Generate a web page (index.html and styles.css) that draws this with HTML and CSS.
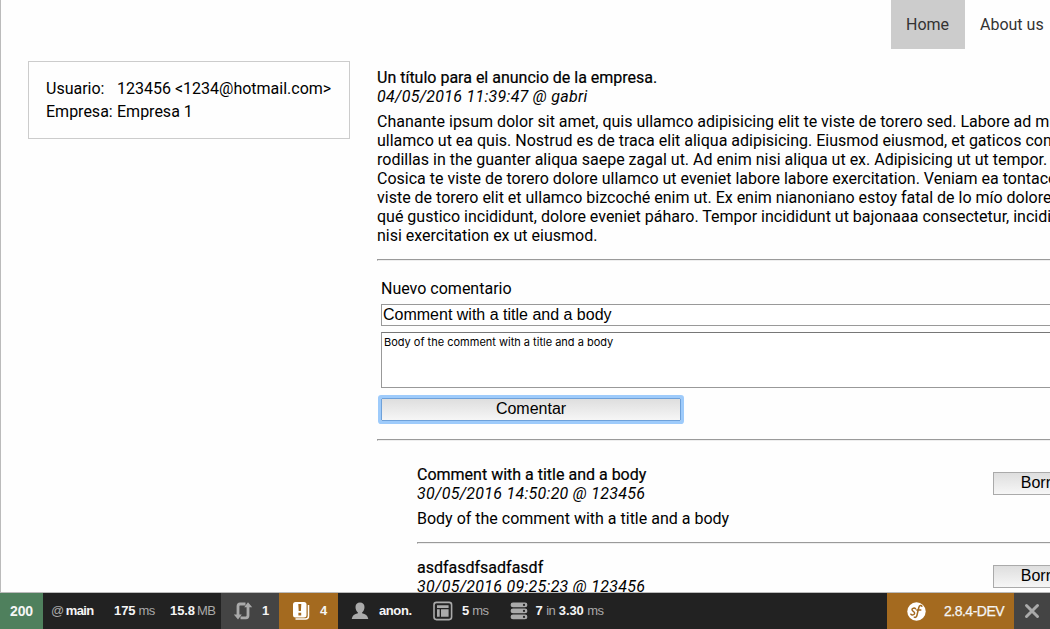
FILE: index.html
```html
<!DOCTYPE html>
<html lang="es">
<head>
<meta charset="utf-8">
<title>Anuncio</title>
<link rel="stylesheet" href="styles.css">
</head>
<body>
<div class="page">
  <nav class="nav"><a class="nav-item current">Home</a><a class="nav-item">About us</a></nav>
  <div class="columns">
    <aside class="user-card">
      <span>Usuario:</span><span>123456 &lt;1234@hotmail.com&gt;</span>
      <span>Empresa:</span><span>Empresa 1</span>
    </aside>
    <main class="content">
      <article class="post">
        <h1 class="title">Un título para el anuncio de la empresa.</h1>
        <p class="meta">04/05/2016 11:39:47 @ gabri</p>
        <p class="text">Chanante ipsum dolor sit amet, quis ullamco adipisicing elit te viste de torero sed. Labore ad minim<br>ullamco ut ea quis. Nostrud es de traca elit aliqua adipisicing. Eiusmod eiusmod, et gaticos consectetur<br>rodillas in the guanter aliqua saepe zagal ut. Ad enim nisi aliqua ut ex. Adipisicing ut ut tempor.<br>Cosica te viste de torero dolore ullamco ut eveniet labore labore exercitation. Veniam ea tontaco<br>viste de torero elit et ullamco bizcoché enim ut. Ex enim nianoniano estoy fatal de lo mío dolore<br>qué gustico incididunt, dolore eveniet páharo. Tempor incididunt ut bajonaaa consectetur, incididunt<br>nisi exercitation ex ut eiusmod.</p>
      </article>
      <div class="rule"></div>
      <form class="comment-form">
        <label class="form-label">Nuevo comentario</label>
        <input class="field" type="text" value="Comment with a title and a body">
        <textarea class="area">Body of the comment with a title and a body</textarea>
        <button class="button submit" type="button">Comentar</button>
      </form>
      <div class="rule"></div>
      <section class="comments">
        <article class="comment">
          <div>
            <h2 class="title">Comment with a title and a body</h2>
            <p class="meta">30/05/2016 14:50:20 @ 123456</p>
            <p class="text">Body of the comment with a title and a body</p>
          </div>
          <button class="button delete" type="button">Borrar</button>
        </article>
        <div class="rule"></div>
        <article class="comment second">
          <div>
            <h2 class="title">asdfasdfsadfasdf</h2>
            <p class="meta">30/05/2016 09:25:23 @ 123456</p>
          </div>
          <button class="button delete" type="button">Borrar</button>
        </article>
      </section>
    </main>
  </div>
</div>
<footer class="toolbar">
  <div class="cell status"><b>200</b></div>
  <div class="cell route"><i>@</i> <b>main</b></div>
  <div class="cell time"><b>175</b> <i>ms</i></div>
  <div class="cell memory"><b>15.8</b> <i>MB</i></div>
  <div class="cell ajax">
    <svg width="20" height="20" viewBox="0 0 20 20"><path fill="none" stroke="#aaa" stroke-width="2.800" d="M12.500 3H7Q5 3 5 5.200V15M7.500 16.800H13q2 0 2-2.200V5"/><path fill="#aaa" d="M.8 13.500h8L5 18.500zM11.200 6.300h8L15 1.200z"/></svg>
    <b>1</b>
  </div>
  <div class="cell logs">
    <svg width="18" height="20" viewBox="0 0 18 20"><path fill="none" stroke="#fff" stroke-width="1.500" d="M3.500 18h10q3 0 3-3V4"/><rect x="1" y="1" width="13.500" height="15.500" rx="2.500" fill="#fff"/><path fill="#a46a1f" d="M6.300 3h3l-.4 7H6.700zM6.400 11.800h2.800v2.700H6.400z"/></svg>
    <b>4</b>
  </div>
  <div class="cell user">
    <svg width="18" height="18" viewBox="0 0 18 18"><path fill="#aaa" d="M4.500 5C4.500 2 6.300.4 9 .4S13.500 2 13.500 5c0 2.500-1 4.500-2.400 5.500v.8c3.300.7 5.700 2.300 6.200 5.600H.7c.5-3.300 2.900-4.900 6.200-5.600v-.8C5.500 9.500 4.500 7.500 4.500 5z"/></svg>
    <b>anon.</b>
  </div>
  <div class="cell twig">
    <svg width="20" height="20" viewBox="0 0 20 20"><rect x="1" y="1.400" width="17.600" height="17.200" rx="2.500" fill="none" stroke="#aaa" stroke-width="1.600"/><path fill="#aaa" d="M4 4.300h11.600v2.800H4zM4 8.200h2.700v7.500H4zM8 8.200h7.600v7.500H8z"/></svg>
    <b>5</b> <i>ms</i>
  </div>
  <div class="cell database">
    <svg width="18" height="18" viewBox="0 0 18 18"><path fill="#aaa" d="M3 .5h12a2.400 2.400 0 0 1 0 4.800H3A2.400 2.400 0 0 1 3 .5zM3 6.500h12a2.400 2.400 0 0 1 0 4.800H3a2.400 2.400 0 0 1 0-4.800zM3 12.500h12a2.400 2.400 0 0 1 0 4.800H3a2.400 2.400 0 0 1 0-4.800z"/><g fill="#222"><circle cx="14" cy="2.900" r="1.100"/><circle cx="14" cy="8.900" r="1.100"/><circle cx="14" cy="14.900" r="1.100"/></g></svg>
    <b>7</b> <i>in</i> <b>3.30</b> <i>ms</i>
  </div>
  <div class="cell version">
    <svg width="19" height="19" viewBox="0 0 19 19"><circle cx="9.500" cy="9.500" r="9.200" fill="#fff"/><path fill="none" stroke="#a46a1f" stroke-width="1.500" stroke-linecap="round" d="M8.500 6.700C7.700 5.700 4.900 6 5 7.800c.1 1.600 2.700 1.600 2.600 3.400-.1 1.900-2.800 2.200-3.700 1M14.900 4.300c-.5-1.400-2.500-1-3.100 1.200l-1.900 8c-.4 1.700-1.600 2.300-2.600 1.700M9.800 7.900h4"/></svg>
    <b>2.8.4-DEV</b>
  </div>
  <div class="cell close">
    <svg width="16" height="16" viewBox="0 0 16 16"><path fill="none" stroke="#aaa" stroke-width="3" stroke-linecap="round" d="M2.500 2.500l11 11M13.500 2.500l-11 11"/></svg>
  </div>
</footer>
</body>
</html>
```
FILE: styles.css
```css
* { box-sizing: border-box; }
html, body { height: 100%; margin: 0; overflow: hidden; }
body { display: flex; flex-direction: column; background: #fff; color: #000; font: 16px/19px Roboto, sans-serif; }
h1, h2, p { margin: 0; font-size: 16px; font-weight: 400; }
.page { flex: 1; min-height: 0; overflow: hidden; border-left: 1px solid #bbb; border-bottom: 1px solid #bbb; background: #fefefe; }
.nav { display: flex; margin-left: 890px; height: 49px; white-space: nowrap; }
.nav-item { flex: none; padding: 15px; color: #333; }
.current { width: 74px; background: #ccc; }
.columns { display: flex; gap: 27px; padding: 12px 0 0 27px; }
.user-card { display: grid; grid-template-columns: 71px 1fr; align-content: start; row-gap: 4px; width: 322px; height: 78px; padding: 17px; border: 1px solid #ccc; white-space: nowrap; flex: none; }
.content { flex: none; width: 760px; padding-top: 7px; }
.title { -webkit-text-stroke: .2px #000; }
.meta { font-style: italic; letter-spacing: .27px; }
.text { margin-top: 6px; white-space: nowrap; }
.rule { height: 2px; border-top: 1px solid #9a9a9a; border-left: 1px solid #9a9a9a; border-bottom: 1px solid #eee; }
.post { height: 191px; }
.comment-form { display: flex; flex-direction: column; height: 178px; padding: 18px 4px 0; }
.form-label { margin-bottom: 6px; }
.field, .area, .button { margin: 0; border-radius: 0; color: #000; outline: 0; flex: none; }
.field { height: 22px; padding: 0 1px; border: 1px solid #999; background: #fff; font: 16px "Liberation Sans", sans-serif; }
.area { height: 56px; margin-top: 6px; padding: 3px 2px; border: 1px solid #999; border-top-color: #777; background: #fff; font: 11px/13px Inter, sans-serif; resize: none; overflow: hidden; }
.button { padding: 0 0 2px; border: 1px solid #aaa; background: linear-gradient(#dedede, #f6f6f6); font: 16px/19px "Liberation Sans", sans-serif; }
.submit { width: 300px; height: 23px; margin-top: 10px; border-color: #6fa1d9; box-shadow: 0 0 0 3px #9ecbfb; border-radius: 1px; }
.comments { padding-left: 40px; }
.comment { display: flex; justify-content: space-between; height: 101px; padding-top: 24px; }
.second { padding-top: 14px; }
.delete { width: 100px; height: 23px; margin: 7px 44px 0 0; flex: none; }
.toolbar { flex: none; height: 36px; display: flex; background: #222; color: #f5f5f5; font: 13px/36px "Liberation Sans", sans-serif; white-space: nowrap; }
.toolbar b { font-weight: 700; letter-spacing: -.1px; }
.toolbar i { font-style: normal; color: #aaa; letter-spacing: -.5px; }
.cell { display: flex; align-items: center; gap: 4px; flex: none; }
.status { width: 43px; justify-content: center; background: #4f805d; font-size: 14px; }
.route { width: 71px; padding-left: 8px; gap: 2px; }
.toolbar .route b { letter-spacing: -.6px; }
.time { width: 56px; gap: 3px; }
.memory { width: 51px; gap: 2px; }
.ajax { width: 58px; padding-left: 12px; gap: 9px; background: #444; }
.logs { width: 59px; padding-left: 13px; gap: 10px; background: #a46a1f; }
.user { width: 95px; padding-left: 13px; gap: 10px; }
.toolbar .user b { letter-spacing: -.4px; }
.twig { width: 77px; gap: 3px; }
.twig b { margin-left: 6px; }
.database b:first-of-type { margin-left: 4px; }
.database { gap: 3.5px; }
.version { width: 127px; margin-left: auto; padding-left: 20px; gap: 18px; background: #a46a1f; }
.toolbar .version b { font-weight: 400; font-size: 14px; letter-spacing: -.5px; -webkit-text-stroke: .25px #f5f5f5; }
.close { width: 36px; justify-content: center; background: #444; }
```
